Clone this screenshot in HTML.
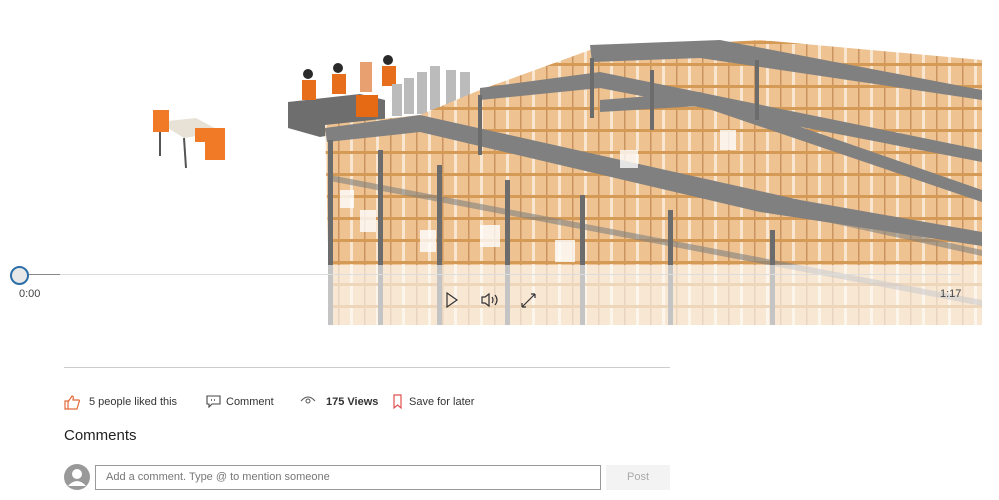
<!DOCTYPE html>
<html><head><meta charset="utf-8"><style>
body{margin:0;width:999px;height:500px;background:#fff;font-family:"Liberation Sans",sans-serif;position:relative;overflow:hidden;color:#333}
.a{position:absolute}
</style></head><body>
<svg class="a" style="left:0;top:0" width="999" height="330">
<defs>
<pattern id="bx" width="26" height="22" patternUnits="userSpaceOnUse">
<rect width="26" height="22" fill="#eec291"/><rect x="0" y="0" width="1.5" height="22" fill="#c99460"/><rect x="12" y="0" width="3" height="22" fill="#f8e6d0"/><rect y="19" width="26" height="3" fill="#d59a55"/>
</pattern>
</defs>
<polygon points="158,122 196,118 222,132 184,138" fill="#e8e2d6"/>
<line x1="160" y1="124" x2="160" y2="156" stroke="#555" stroke-width="2"/>
<line x1="184" y1="138" x2="186" y2="168" stroke="#555" stroke-width="2"/>
<rect x="153" y="110" width="16" height="22" fill="#f07a25"/>
<rect x="195" y="128" width="30" height="14" fill="#f07a25"/>
<rect x="205" y="142" width="20" height="18" fill="#f07a25"/>
<polygon points="288,102 360,94 385,100 385,125 320,137 288,128" fill="#6e6e6e"/>
<rect x="356" y="95" width="22" height="22" fill="#e66a14"/>
<g fill="#2a2a2a"><circle cx="308" cy="74" r="5"/><circle cx="338" cy="68" r="5"/><circle cx="388" cy="60" r="5"/></g>
<g fill="#e76e1a"><rect x="302" y="80" width="14" height="20"/><rect x="332" y="74" width="14" height="20"/><rect x="382" y="66" width="14" height="20"/></g>
<rect x="360" y="62" width="12" height="30" fill="#e9a070"/>
<g fill="#bbb"><rect x="392" y="84" width="10" height="32"/><rect x="404" y="78" width="10" height="36"/><rect x="417" y="72" width="10" height="42"/><rect x="430" y="66" width="10" height="44"/><rect x="446" y="70" width="10" height="40"/><rect x="460" y="72" width="10" height="40"/></g>
<polygon points="325,125 420,115 480,90 590,50 760,40 982,60 982,325 330,325" fill="url(#bx)"/>
<g fill="#808080">
<polygon points="590,45 720,40 982,90 982,100 700,58 592,62"/>
<polygon points="480,88 600,72 982,150 982,162 600,88 480,100"/>
<polygon points="325,128 420,115 800,200 982,232 982,246 760,212 420,132 327,142"/>
<polygon points="600,100 700,92 982,190 982,202 700,106 600,112"/>
<polygon points="330,175 982,300 982,306 330,181" opacity="0.6"/>
<polygon points="480,140 982,250 982,256 480,146" opacity="0.6"/>
</g>
<g fill="#6c6c6c">
<rect x="328" y="140" width="5" height="185"/><rect x="378" y="150" width="5" height="175"/><rect x="437" y="165" width="5" height="160"/><rect x="505" y="180" width="5" height="145"/><rect x="580" y="195" width="5" height="130"/><rect x="668" y="210" width="5" height="115"/><rect x="770" y="230" width="5" height="95"/>
<rect x="478" y="95" width="4" height="60"/><rect x="590" y="58" width="4" height="60"/><rect x="650" y="70" width="4" height="60"/><rect x="755" y="60" width="4" height="60"/>
</g>
<g fill="#fff" opacity="0.8"><rect x="360" y="210" width="16" height="22"/><rect x="420" y="230" width="16" height="22"/><rect x="480" y="225" width="20" height="22"/><rect x="555" y="240" width="20" height="22"/><rect x="720" y="130" width="16" height="20"/><rect x="340" y="190" width="14" height="18"/><rect x="620" y="150" width="18" height="18"/></g>
<rect x="260" y="265" width="730" height="65" fill="#fff" opacity="0.6"/>
</svg>
<div class="a" style="left:18px;top:274px;width:942px;height:1px;background:#ddd"></div>
<div class="a" style="left:18px;top:274px;width:42px;height:1px;background:#888"></div>
<div class="a" style="left:10px;top:266px;width:15px;height:15px;border:2px solid #2c6ea8;border-radius:50%;background:#e8e8e8"></div>
<div class="a" style="left:19px;top:288px;font-size:11px;color:#444">0:00</div>
<div class="a" style="left:940px;top:288px;font-size:11px;color:#444">1:17</div>
<svg class="a" style="left:440px;top:290px" width="100" height="20" fill="none" stroke="#333" stroke-width="1.2">
<path d="M7,3 L17,10 L7,17 Z"/>
<path d="M42,7 h3 l4,-3 v12 l-4,-3 h-3 z M52,7 q2,3 0,6 M55,5 q4,5 0,10"/>
<path d="M82,17 L95,4 M82,17 h4 M82,17 v-4 M95,4 h-4 M95,4 v4"/>
</svg>
<div class="a" style="left:64px;top:367px;width:606px;height:1px;background:#ccc"></div>
<svg class="a" style="left:64px;top:394px" width="18" height="16" fill="none" stroke="#e46a3b" stroke-width="1.2"><path d="M1,7 h3 v8 h-3z M4,8 l4,-6 q2,0 1,4 h6 q1,1 0,2 l-2,7 h-9"/></svg>
<div class="a" style="left:89px;top:396px;font-size:11px">5 people liked this</div>
<svg class="a" style="left:206px;top:395px" width="15" height="13" fill="none" stroke="#444" stroke-width="1.1"><path d="M1,1 h13 v8 h-8 l-3,3 v-3 h-2z"/><path d="M5,5 h1 M8,5 h1" stroke-width="1.5"/></svg>
<div class="a" style="left:226px;top:396px;font-size:11px">Comment</div>
<svg class="a" style="left:300px;top:394px" width="16" height="12" fill="none" stroke="#555" stroke-width="1"><path d="M1,7 q7,-8 14,0"/><circle cx="8" cy="7" r="2"/></svg>
<div class="a" style="left:326px;top:396px;font-size:11px;font-weight:bold">175 Views</div>
<svg class="a" style="left:393px;top:394px" width="10" height="16" fill="none" stroke="#e05050" stroke-width="1.2"><path d="M1,1 h7 v13 l-3.5,-3 l-3.5,3z"/></svg>
<div class="a" style="left:409px;top:396px;font-size:11px">Save for later</div>
<div class="a" style="left:64px;top:427px;font-size:15px;color:#222">Comments</div>
<svg class="a" style="left:64px;top:464px" width="26" height="26"><circle cx="13" cy="13" r="13" fill="#999"/><circle cx="13" cy="10" r="5" fill="#fff"/><path d="M4,22 q9,-10 18,0" fill="#fff"/></svg>
<div class="a" style="left:95px;top:465px;font-size:11px;color:#777;line-height:23px;padding-left:10px;box-sizing:border-box;width:506px;height:25px;border:1px solid #999">Add a comment. Type @ to mention someone</div>
<div class="a" style="left:606px;top:465px;width:64px;height:25px;background:#f3f3f3;color:#aaa;font-size:11px;text-align:center;line-height:25px">Post</div>
</body></html>
